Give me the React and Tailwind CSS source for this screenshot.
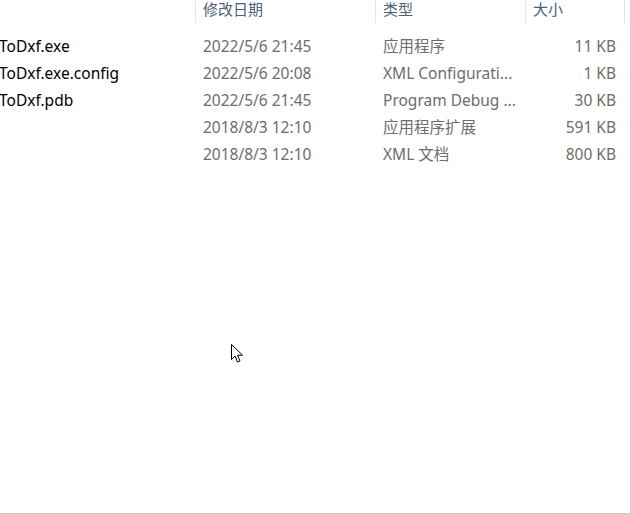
import React from 'react'

const rows = [
  { name: 'ToDxf.exe', date: '2022/5/6 21:45', type: '应用程序', size: '11 KB' },
  { name: 'ToDxf.exe.config', date: '2022/5/6 20:08', type: 'XML Configurati...', size: '1 KB' },
  { name: 'ToDxf.pdb', date: '2022/5/6 21:45', type: 'Program Debug ...', size: '30 KB' },
  { name: '', date: '2018/8/3 12:10', type: '应用程序扩展', size: '591 KB' },
  { name: '', date: '2018/8/3 12:10', type: 'XML 文档', size: '800 KB' },
]

const font = { fontFamily: '"Noto Sans", "Noto Sans CJK SC", sans-serif' }

function Cursor() {
  return (
    <svg className="absolute left-[231px] top-[344px]" width="13" height="20" viewBox="0 0 13 20">
      <path
        d="M0.5 0.5 L0.5 15.5 L4 12 L6.5 18 L9 17 L6.5 11.2 L11.5 11.2 Z"
        fill="#fff"
        stroke="#000"
        strokeWidth="1"
      />
    </svg>
  )
}

export default function App() {
  return (
    <div className="relative w-[630px] h-[514px] bg-white overflow-hidden text-[15.5px]" style={font}>
      {/* column headers */}
      <div className="flex h-[23px] text-[#4c607a] text-[15px]">
        <div className="w-[195px]" />
        <div className="w-[180px] border-l border-[#e5e5e5] pl-[7px] leading-[18px] whitespace-nowrap">修改日期</div>
        <div className="w-[150px] border-l border-[#e5e5e5] pl-[7px] leading-[18px] whitespace-nowrap">类型</div>
        <div className="w-[100px] border-l border-r border-[#e5e5e5] pl-[7px] leading-[18px] whitespace-nowrap">大小</div>
      </div>

      <div className="mt-[10px] flex flex-col">
        {rows.map((r, i) => (
          <div key={i} className="flex h-[27px] items-center leading-[27px]">
            <div className="w-[195px] text-black -ml-[1px] whitespace-nowrap">{r.name}</div>
            <div className="w-[180px] pl-[9px] text-[#6d6d6d] whitespace-nowrap">{r.date}</div>
            <div className="w-[150px] pl-[9px] text-[#6d6d6d] whitespace-nowrap">{r.type}</div>
            <div className="w-[92px] text-right text-[#6d6d6d] whitespace-nowrap">{r.size}</div>
          </div>
        ))}
      </div>

      <div className="absolute bottom-0 left-0 w-full h-[1px] bg-[#c4c4c4]" />
      <Cursor />
    </div>
  )
}
